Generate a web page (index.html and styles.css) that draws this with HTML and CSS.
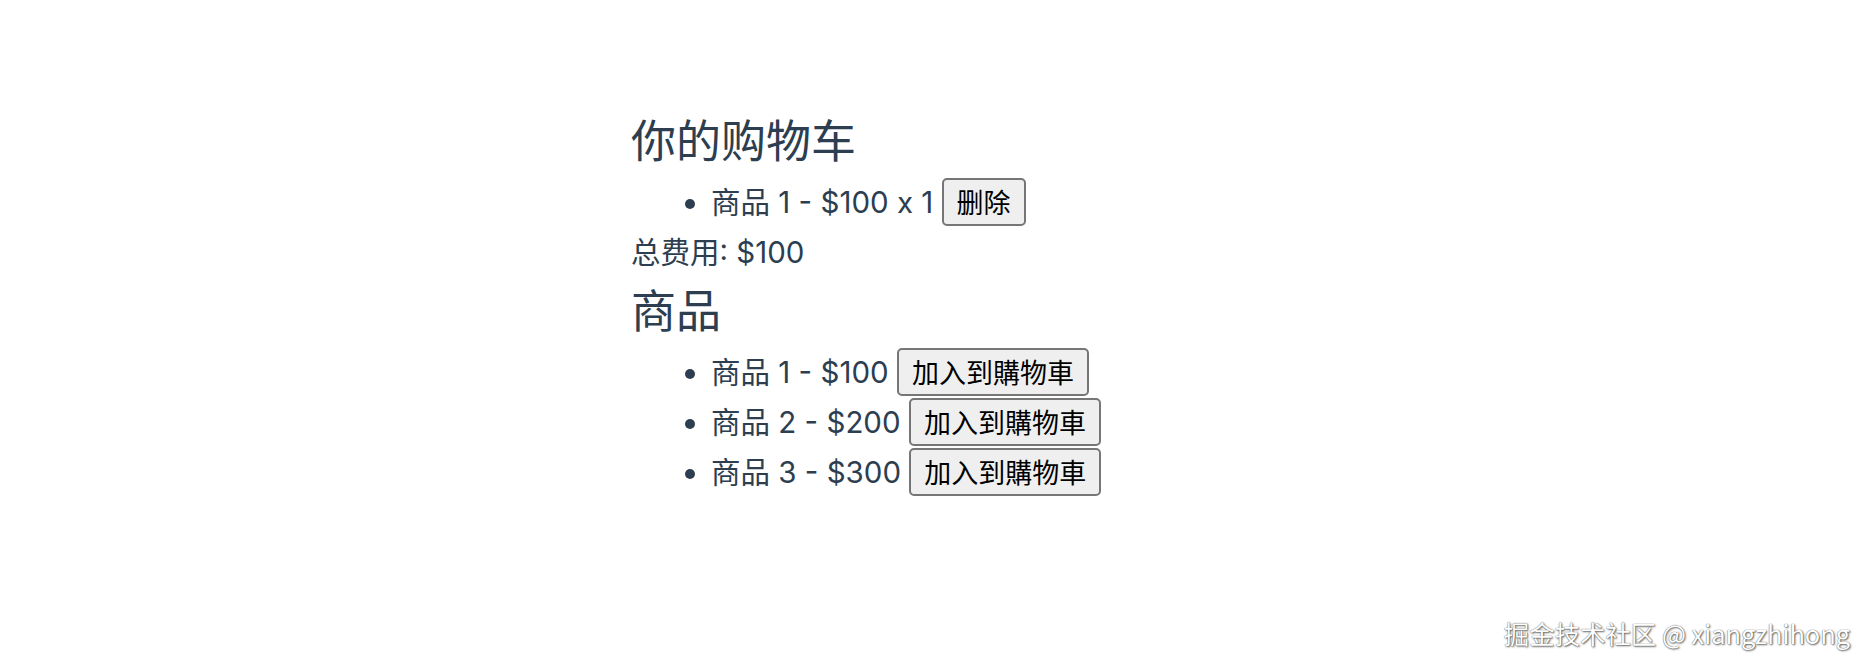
FILE: index.html
```html
<!DOCTYPE html>
<html>
<head>
    <meta charset="utf-8">
    <title>购物车</title>
    <link rel="stylesheet" href="styles.css">
</head>
<body>
    <div id="app">
        <h2 class="section-title">你的购物车</h2>
        <ul class="item-list">
            <li>商品 1 - $100 x 1 <button>删除</button></li>
        </ul>
        <p class="total">总费用: $100</p>
        <h2 class="section-title">商品</h2>
        <ul class="item-list">
            <li>商品 1 - $100 <button>加入到購物車</button></li>
            <li>商品 2 - $200 <button>加入到購物車</button></li>
            <li>商品 3 - $300 <button>加入到購物車</button></li>
        </ul>
    </div>
    <div class="watermark">掘金技术社区 @ xiangzhihong</div>
</body>
</html>
```

FILE: styles.css
```css
body {
    margin: 0;
    background: #fff;
    font-family: Inter, "Noto Sans CJK SC", sans-serif;
}
#app {
    width: 608px;
    margin: 0 auto;
    padding-top: 107px;
    color: #2c3e50;
    font-size: 29.5px;
}
.section-title {
    margin: 0;
    font-size: 45px;
    font-weight: 400;
    line-height: 70px;
}
.item-list {
    margin: 0;
    padding-left: 80px;
}
.item-list li {
    line-height: 50px;
    height: 50px;
}
.item-list button {
    height: 48px;
    padding: 0 13px;
    font-family: "Noto Sans CJK SC", sans-serif;
    font-size: 27px;
    color: #000;
    background-color: #efefef;
    border: 2px solid #767676;
    border-radius: 5px;
}
.total {
    margin: 0;
    line-height: 50px;
}
.watermark {
    position: absolute;
    right: 20px;
    bottom: 21px;
    font-family: "Noto Sans CJK SC", sans-serif;
    font-size: 25.4px;
    color: #fff;
    text-shadow: 0 0 1px #333, 1px 1px 2px #666;
}
```
